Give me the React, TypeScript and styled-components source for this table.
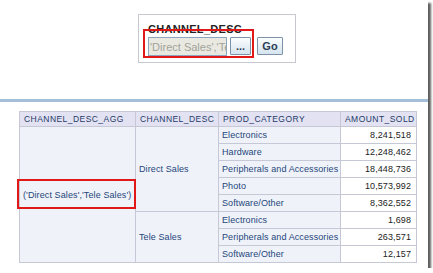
import styled, { createGlobalStyle } from "styled-components";

const GlobalStyle = createGlobalStyle`
  body {
    margin: 0;
    background: #ffffff;
  }
`;

const Page = styled.div`
  position: relative;
  width: 428px;
  height: 268px;
  background: #ffffff;
  box-shadow: 3px 3px 2px rgba(40, 40, 40, 0.75);
  overflow: hidden;
`;

const Prompt = styled.div`
  display: flex;
  padding: 14px 0 0 138px;
`;

const PromptBox = styled.div`
  width: 158px;
  height: 49px;
  border: 1px solid #c8c8d0;
  padding: 8px 0 0 9px;
  box-sizing: border-box;
`;

const PromptLabel = styled.div`
  font-family: "Liberation Sans", Arial, sans-serif;
  font-weight: bold;
  font-size: 11px;
  letter-spacing: 0.3px;
  color: #222;
  line-height: 12px;
  height: 14px;
`;

const PromptRow = styled.div`
  display: flex;
  align-items: flex-start;
  gap: 3px;
`;

const ValueInput = styled.input`
  width: 79px;
  height: 19px;
  box-sizing: border-box;
  margin: 0;
  border: 1px solid #8ea3bc;
  background: #e9e9e1;
  color: #a2a29a;
  font-family: "Liberation Sans", Arial, sans-serif;
  font-size: 11px;
  padding: 0 0 0 1px;
  outline: none;
`;

const Button = styled.div<{ $w: number; $gap?: number }>`
  width: ${(p) => p.$w}px;
  height: 18px;
  margin-left: ${(p) => p.$gap ?? 0}px;
  box-sizing: border-box;
  border: 1px solid #7d91a8;
  border-radius: 1px;
  background: linear-gradient(#fbfdfe, #d5e4ee);
  font-family: "Liberation Sans", Arial, sans-serif;
  font-weight: bold;
  font-size: 11px;
  color: #2d3f55;
  display: flex;
  align-items: center;
  justify-content: center;
`;

const Annotation = styled.div<{ $x: number; $y: number; $w: number; $h: number }>`
  position: absolute;
  left: ${(p) => p.$x}px;
  top: ${(p) => p.$y}px;
  width: ${(p) => p.$w}px;
  height: ${(p) => p.$h}px;
  border: 2px solid #e01818;
  box-sizing: border-box;
`;

const Divider = styled.div`
  margin-top: 36px;
  height: 3px;
  background: #a6bfd8;
`;

const Table = styled.table`
  margin: 9px 0 0 19px;
  width: 397px;
  border-collapse: collapse;
  table-layout: fixed;
  font-family: "Liberation Sans", Arial, sans-serif;
`;

const Col = styled.col<{ $w: number }>`
  width: ${(p) => p.$w}px;
`;

const Head = styled.th`
  height: 14px;
  padding: 0 0 0 4px;
  background: #e2e2f2;
  border: 1px solid #c6c9d5;
  color: #1f3a68;
  font-size: 8.5px;
  font-weight: normal;
  letter-spacing: 0.45px;
  text-align: left;
  white-space: nowrap;
  overflow: hidden;
`;

const Cell = styled.td<{ $num?: boolean }>`
  height: 16px;
  padding: 0 ${(p) => (p.$num ? "5px" : "0")} 0 ${(p) => (p.$num ? "0" : "3px")};
  border: 1px solid #c6c9d5;
  background: ${(p) => (p.$num ? "#ffffff" : "#eff3f9")};
  color: ${(p) => (p.$num ? "#1c1c1c" : "#26457a")};
  font-size: 9px;
  letter-spacing: 0.1px;
  text-align: ${(p) => (p.$num ? "right" : "left")};
  vertical-align: middle;
  white-space: nowrap;
  overflow: hidden;
`;

const rows = [
  { channel: "Direct Sales", span: 5, cat: "Electronics", amount: "8,241,518" },
  { cat: "Hardware", amount: "12,248,462" },
  { cat: "Peripherals and Accessories", amount: "18,448,736" },
  { cat: "Photo", amount: "10,573,992" },
  { cat: "Software/Other", amount: "8,362,552" },
  { channel: "Tele Sales", span: 3, cat: "Electronics", amount: "1,698" },
  { cat: "Peripherals and Accessories", amount: "263,571" },
  { cat: "Software/Other", amount: "12,157" },
];

const App = () => {
  return (
    <Page>
      <GlobalStyle />
      <Prompt>
        <PromptBox>
          <PromptLabel>CHANNEL_DESC</PromptLabel>
          <PromptRow>
            <ValueInput readOnly value="'Direct Sales','Tele Sales'" />
            <Button $w={21}>...</Button>
            <Button $w={26} $gap={3}>Go</Button>
          </PromptRow>
        </PromptBox>
      </Prompt>
      <Annotation $x={143} $y={29} $w={111} $h={29} />
      <Divider />
      <Table>
        <colgroup>
          <Col $w={116} />
          <Col $w={83} />
          <Col $w={122} />
          <Col $w={76} />
        </colgroup>
        <thead>
          <tr>
            <Head>CHANNEL_DESC_AGG</Head>
            <Head>CHANNEL_DESC</Head>
            <Head>PROD_CATEGORY</Head>
            <Head>AMOUNT_SOLD</Head>
          </tr>
        </thead>
        <tbody>
          {rows.map((r, i) => (
            <tr key={i}>
              {i === 0 && <Cell rowSpan={8}>('Direct Sales','Tele Sales')</Cell>}
              {r.channel && <Cell rowSpan={r.span}>{r.channel}</Cell>}
              <Cell>{r.cat}</Cell>
              <Cell $num>{r.amount}</Cell>
            </tr>
          ))}
        </tbody>
      </Table>
      <Annotation $x={17} $y={179} $w={119} $h={30} />
    </Page>
  );
};

export default App;
